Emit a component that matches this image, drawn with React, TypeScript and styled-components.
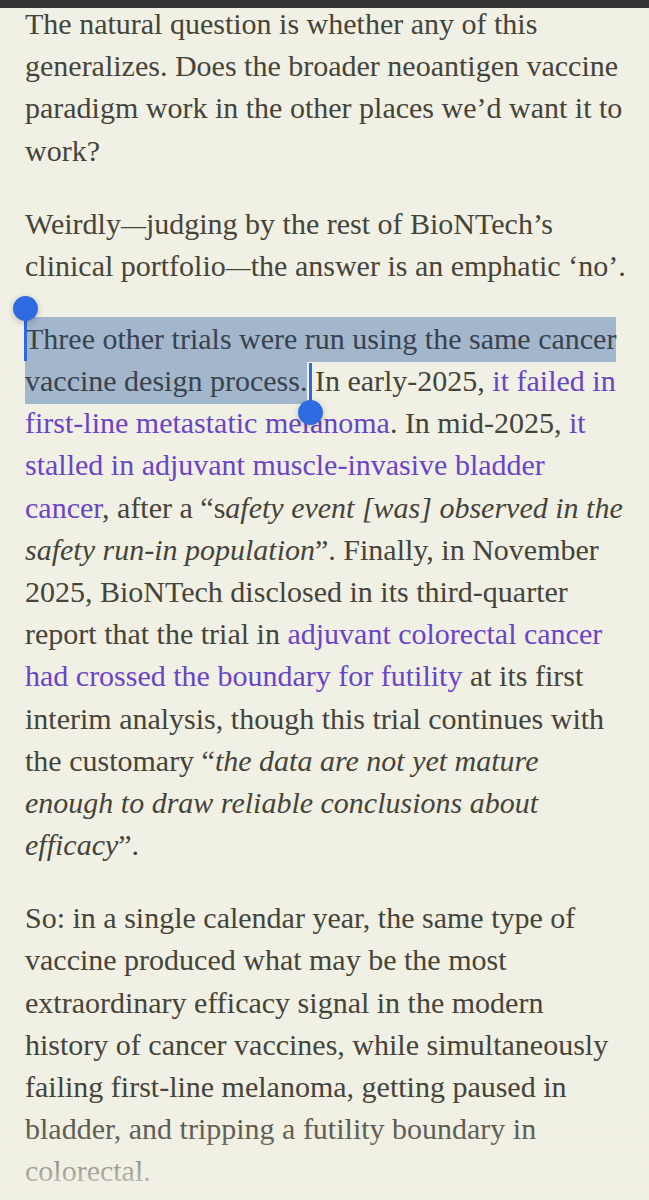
import React from 'react';
import styled, { createGlobalStyle } from 'styled-components';

const GlobalStyle = createGlobalStyle`
    html, body {
        margin: 0;
        padding: 0;
        background: #f1f0e4;
    }
`;

const Page = styled.div`
    min-height: 1200px;
    padding: 3px 0 0 25px;
    box-sizing: border-box;
    background: #f1f0e4;
    font-family: "Liberation Serif", "Times New Roman", serif;
    font-size: 30px;
    line-height: 42.2px;
    color: #45443a;
`;

const TopBar = styled.div`
    position: fixed;
    top: 0;
    left: 0;
    right: 0;
    height: 8px;
    background: #333436;
    z-index: 3;
`;

const BottomFade = styled.div`
    position: fixed;
    left: 0;
    right: 0;
    bottom: 0;
    height: 100px;
    background: linear-gradient(
        to bottom,
        rgba(241, 240, 228, 0) 0%,
        rgba(241, 240, 228, 0.2) 40%,
        rgba(241, 240, 228, 0.66) 80%,
        rgba(241, 240, 228, 0.72) 100%
    );
    pointer-events: none;
    z-index: 2;
`;

const Paragraph = styled.p`
    margin: 0 0 30.8px;
    white-space: nowrap;
`;

const Link = styled.span`
    color: #6a44c8;
`;

const Em = styled.em`
    font-style: italic;
`;

const Dash = styled.span`
    font-size: 25px;
    line-height: 0;
`;

const Selected = styled.span`
    background: #a2b7cb;
    color: #39424e;
    padding: 5px 0 7px;
    -webkit-box-decoration-break: clone;
    box-decoration-break: clone;
`;

const Handle = styled.span<{ $end?: boolean }>`
    position: relative;
    display: inline-block;
    width: 0;
    height: 0;
    vertical-align: baseline;

    &::before {
        content: '';
        position: absolute;
        left: ${p => (p.$end ? '2px' : '-1px')};
        top: ${p => (p.$end ? '-28px' : '-40px')};
        width: 3px;
        height: ${p => (p.$end ? '48px' : '52px')};
        background: #2e6ae0;
    }

    &::after {
        content: '';
        position: absolute;
        left: ${p => (p.$end ? '-9px' : '-12px')};
        top: ${p => (p.$end ? '9px' : '-53px')};
        width: 25px;
        height: 25px;
        border-radius: 50%;
        background: #2e6ae0;
        box-shadow: 0 2px 7px rgba(0, 0, 0, 0.22);
    }
`;

export default function App() {
    return (
        <>
            <GlobalStyle />
            <TopBar />
            <Page>
                <Paragraph>
                    The natural question is whether any of this<br />
                    generalizes. Does the broader neoantigen vaccine<br />
                    paradigm work in the other places we’d want it to<br />
                    work?
                </Paragraph>
                <Paragraph>
                    Weirdly<Dash>—</Dash>judging by the rest of BioNTech’s<br />
                    clinical portfolio<Dash>—</Dash>the answer is an emphatic ‘no’.
                </Paragraph>
                <Paragraph>
                    <Handle />
                    <Selected>
                        Three other trials were run using the same cancer <br />
                        vaccine design process.
                    </Selected>
                    <Handle $end /> In early-2025, <Link>it failed in<br />
                    first-line metastatic melanoma</Link>. In mid-2025, <Link>it<br />
                    stalled in adjuvant muscle-invasive bladder<br />
                    cancer</Link>, after a “s<Em>afety event [was] observed in the<br />
                    safety run-in population</Em>”. Finally, in November<br />
                    2025, BioNTech disclosed in its third-quarter<br />
                    report that the trial in <Link>adjuvant colorectal cancer<br />
                    had crossed the boundary for futility</Link> at its first<br />
                    interim analysis, though this trial continues with<br />
                    the customary “<Em>the data are not yet mature<br />
                    enough to draw reliable conclusions about<br />
                    efficacy</Em>”.
                </Paragraph>
                <Paragraph>
                    So: in a single calendar year, the same type of<br />
                    vaccine produced what may be the most<br />
                    extraordinary efficacy signal in the modern<br />
                    history of cancer vaccines, while simultaneously<br />
                    failing first-line melanoma, getting paused in<br />
                    bladder, and tripping a futility boundary in<br />
                    colorectal.
                </Paragraph>
            </Page>
            <BottomFade />
        </>
    );
}
